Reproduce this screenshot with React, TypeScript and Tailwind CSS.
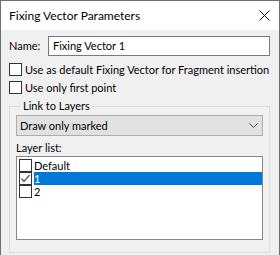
import type React from "react"

const Box: React.FC<{ checked?: boolean }> = ({ checked }) => (
  <span className="flex h-[13px] w-[13px] shrink-0 items-center justify-center border border-[#333333] bg-white">
    {checked && (
      <svg width="11" height="11" viewBox="0 0 11 11" fill="none">
        <path d="M1.5 5.5 L4 8.5 L9.5 2" stroke="#555555" strokeWidth="1.2" />
      </svg>
    )}
  </span>
)

const layers = [
  { name: "Default", checked: false, selected: false },
  { name: "1", checked: true, selected: true },
  { name: "2", checked: false, selected: false },
]

export default function App() {
  return (
    <div
      className="flex h-[255px] w-[280px] flex-col overflow-hidden whitespace-nowrap border-x border-t border-[#6f6f6f] bg-[#f0f0f0] text-[11px] leading-[14px] text-black"
      style={{ fontFamily: 'Lato, "Liberation Sans", sans-serif' }}
    >
      <div className="flex h-[29px] shrink-0 items-center justify-between bg-white pl-[8px] pr-[9px] text-[12px]">
        <span>Fixing Vector Parameters</span>
        <svg width="11" height="11" viewBox="0 0 11 11" fill="none">
          <path d="M0.5 0.5 L10.5 10.5 M10.5 0.5 L0.5 10.5" stroke="#111111" strokeWidth="1" />
        </svg>
      </div>

      <div className="flex flex-col pl-[8px] pr-[9px]">
        <div className="mt-[6px] flex items-center">
          <span className="w-[39px]">Name:</span>
          <div className="flex h-[20px] flex-1 items-center border border-[#7a7a7a] bg-white px-[4px]">
            Fixing Vector 1
          </div>
        </div>

        <label className="mt-[7px] flex h-[13px] items-center gap-[3px]">
          <Box />
          <span>Use as default Fixing Vector for Fragment insertion</span>
        </label>
        <label className="mt-[5px] flex h-[13px] items-center gap-[3px]">
          <Box />
          <span>Use only first point</span>
        </label>

        <fieldset className="mt-[5px] border border-[#dcdcdc] px-[6px] pb-[12px]">
          <legend className="ml-[5px] px-[2px]">Link to Layers</legend>
          <div className="mt-[2px] flex h-[21px] items-center justify-between border border-[#adadad] bg-[#e1e1e1] pl-[3px] pr-[4px]">
            <span>Draw only marked</span>
            <svg width="9" height="6" viewBox="0 0 9 6" fill="none">
              <path d="M0.5 0.5 L4.5 4.5 L8.5 0.5" stroke="#444444" strokeWidth="1" />
            </svg>
          </div>
          <div className="mt-[5px]">Layer list:</div>
          <div className="mt-[1px] flex h-[84px] flex-col border border-[#828790] bg-white pl-[2px] pt-[2px]">
            {layers.map((l) => (
              <div key={l.name} className="flex h-[13px] items-center leading-[13px]">
                <Box checked={l.checked} />
                <span
                  className={
                    "ml-[2px] flex h-[13px] flex-1 items-center " +
                    (l.selected ? "bg-[#0078d7] text-white" : "")
                  }
                >
                  {l.name}
                </span>
              </div>
            ))}
          </div>
        </fieldset>
      </div>
    </div>
  )
}
